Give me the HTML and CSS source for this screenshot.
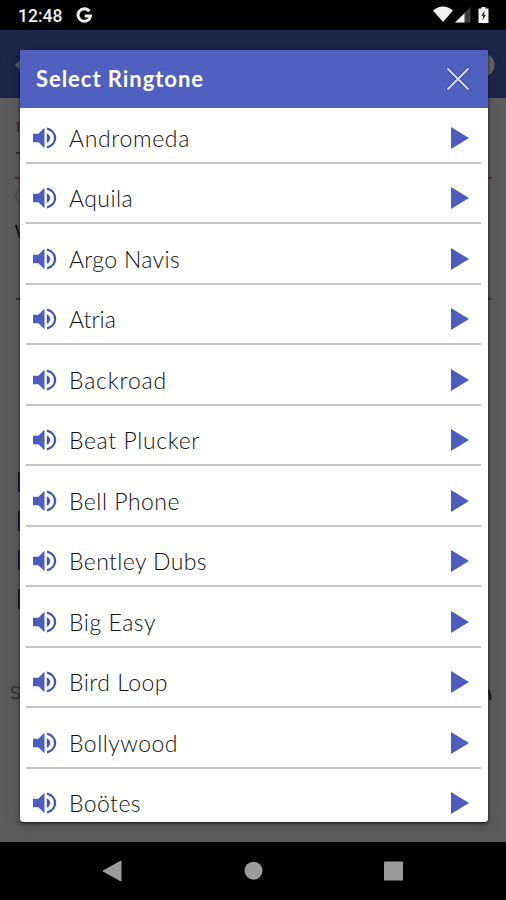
FILE: index.html
```
<!DOCTYPE html>
<html lang="en">
<head>
<meta charset="utf-8">
<title>Select Ringtone</title>
<link rel="stylesheet" href="styles.css">
</head>
<body>
<svg width="0" height="0" class="defs">
  <symbol id="volume" viewBox="0 0 24 22"><path d="M0 6.7h5.3L11.5.8v20.4l-6.2-5.9H0z" fill="#4b5dbd"/><path d="M13.8 6.2q3.3 1.6 3.3 4.8t-3.3 4.8z" fill="#3f52bb"/><path d="M14 1.7C24.8 4.4 24.8 17.6 14 20.3" fill="none" stroke="#4155bd" stroke-width="2.3"/></symbol>
  <symbol id="play" viewBox="0 0 18 22"><path d="M0 0l18 11L0 22z" fill="#4c5dbe"/></symbol>
</svg>
<div class="screen">
  <header class="status">
    <span class="time">12:48</span>
    <svg class="google" viewBox="0 0 16 16"><path d="M12.6 4A5.900 5.900 0 1 0 13.700 8.500H8.200" fill="none" stroke="#eee" stroke-width="2.800"/></svg>
    <svg class="signals" viewBox="0 0 58 18"><path d="M0 4.5Q10-3.5 20 4.5L10 16z" fill="#f2f2f2"/><path d="M37.500 1v15.500H22z" fill="#3c3c3c"/><path d="M31.500 7.200v9.300H22z" fill="#f2f2f2"/><path d="M45.500 2.500h3V1h4v1.500h3V17h-10z" fill="#f2f2f2"/><path d="M51.600 4.800l-3.300 5h2l-.8 4.600 3.400-5.600h-2z" fill="#222"/></svg>
  </header>
  <div class="appbar"></div>
  <main class="backdrop">
    <svg class="behind" viewBox="0 0 506 812"><path d="M15 35l7-7v14z" fill="#5c5e66"/><circle cx="483" cy="35" r="11.500" fill="#686661"/><path d="M16 93h5M18 94v8M15 148h5M488 148h4" stroke="#571c25" stroke-width="1.500"/><path d="M16 123h5M16 269h5M488 269h3" stroke="#222" stroke-width="1.500"/><path d="M20 160q-4 0-4 6t4 6" fill="none" stroke="#464646"/><path d="M16 195l4 13" stroke="#151515" stroke-width="2"/><path d="M19 442v20M19 481v20M19 520v20M19 559v20" stroke="#202240" stroke-width="2"/><path d="M20 658q-8-3-8 2 0 3 4 3 4 1 3 4-2 3-8 0" fill="none" stroke="#333" stroke-width="1.500"/><path d="M487 659q4 4 3 11" fill="none" stroke="#151515" stroke-width="2"/></svg>
    <section class="dialog">
      <div class="title"><h1><span data-width="168">Select Ringtone</span></h1><svg class="close" viewBox="0 0 24 24"><path d="M2 2l20 20M22 2L2 22" stroke="#394683" stroke-width="3.400" stroke-linecap="round"/><path d="M2 2l20 20M22 2L2 22" stroke="#d3d9f1" stroke-width="2" stroke-linecap="round"/></svg></div>
      <ul class="list">
        <li><svg class="volume"><use href="#volume"/></svg><span data-width="121">Andromeda</span><svg class="play"><use href="#play"/></svg></li>
        <li><svg class="volume"><use href="#volume"/></svg><span data-width="64">Aquila</span><svg class="play"><use href="#play"/></svg></li>
        <li><svg class="volume"><use href="#volume"/></svg><span data-width="111">Argo Navis</span><svg class="play"><use href="#play"/></svg></li>
        <li><svg class="volume"><use href="#volume"/></svg><span data-width="47">Atria</span><svg class="play"><use href="#play"/></svg></li>
        <li><svg class="volume"><use href="#volume"/></svg><span data-width="98">Backroad</span><svg class="play"><use href="#play"/></svg></li>
        <li><svg class="volume"><use href="#volume"/></svg><span data-width="131">Beat Plucker</span><svg class="play"><use href="#play"/></svg></li>
        <li><svg class="volume"><use href="#volume"/></svg><span data-width="111">Bell Phone</span><svg class="play"><use href="#play"/></svg></li>
        <li><svg class="volume"><use href="#volume"/></svg><span data-width="138">Bentley Dubs</span><svg class="play"><use href="#play"/></svg></li>
        <li><svg class="volume"><use href="#volume"/></svg><span data-width="87">Big Easy</span><svg class="play"><use href="#play"/></svg></li>
        <li><svg class="volume"><use href="#volume"/></svg><span data-width="99">Bird Loop</span><svg class="play"><use href="#play"/></svg></li>
        <li><svg class="volume"><use href="#volume"/></svg><span data-width="109">Bollywood</span><svg class="play"><use href="#play"/></svg></li>
        <li><svg class="volume"><use href="#volume"/></svg><span data-width="72">Boötes</span><svg class="play"><use href="#play"/></svg></li>
      </ul>
    </section>
  </main>
  <nav class="nav"><svg viewBox="0 0 506 58"><path d="M103 29L121 19v20z" fill="#9c9c9c" stroke="#9c9c9c" stroke-linejoin="round"/><circle cx="253.500" cy="28.700" r="9" fill="#9c9c9c"/><rect x="384" y="19.500" width="19" height="19" rx="1" fill="#9c9c9c"/></svg></nav>
</div>
<script src="script.js"></script>
</body>
</html>
```
FILE: styles.css
```
* { box-sizing: border-box; }
body { margin: 0; background: #000; }
.defs { position: absolute; }
.screen { width: 506px; height: 900px; display: flex; flex-direction: column; overflow: hidden; }
.status { height: 30px; flex: none; display: flex; align-items: center; padding: 0 15px 0 18px; background: #000; }
.time { font: 500 17.5px/30px Roboto, sans-serif; color: #eee; width: 58px; padding-top: 2px; }
.google { width: 17px; height: 17px; margin-top: 1px; }
.signals { width: 58px; height: 18px; margin-left: auto; }
.appbar { height: 68px; flex: none; background: #1d254b; }
.backdrop { height: 744px; flex: none; position: relative; background: #5c5c5c; }
.behind { position: absolute; left: 0; top: -68px; width: 506px; height: 812px; }
.dialog { position: absolute; left: 20px; top: -48px; width: 467.5px; height: 772px; background: #fff; border-radius: 3px; overflow: hidden; }
.backdrop::after { content: ""; position: absolute; left: 20px; top: -48px; width: 467.5px; height: 772px; border-radius: 3px; box-shadow: 0 1px 3px #111, 0 4px 16px rgba(0, 0, 0, .18); pointer-events: none; }
.title { height: 58px; padding: 0 18px 0 16px; display: flex; align-items: center; justify-content: space-between; background: #4f60be; }
h1 { margin: 0; font: 700 22px/58px Lato, sans-serif; color: #fff; }
.close { width: 24px; height: 24px; }
.list { list-style: none; margin: -5px 0 0; padding: 0 7px 0 6px; }
li { height: 60.5px; padding: 11px 12px 0 7px; display: flex; align-items: center; border-bottom: 2px solid #c6c6c6; font: 300 23px/30px Lato, sans-serif; color: #111; }
.volume { width: 24px; height: 22px; flex: none; margin-right: 12px; }
.play { width: 18px; height: 22px; margin-left: auto; }
li span, h1 span { white-space: nowrap; }
.nav { height: 58px; flex: none; background: #000; }
.nav svg { display: block; width: 506px; height: 58px; }
```
FILE: script.js
```
document.querySelectorAll('[data-width]').forEach(function (el) {
  var extra = Number(el.dataset.width) - el.getBoundingClientRect().width;
  el.style.letterSpacing = extra / el.textContent.length + 'px';
});
```
